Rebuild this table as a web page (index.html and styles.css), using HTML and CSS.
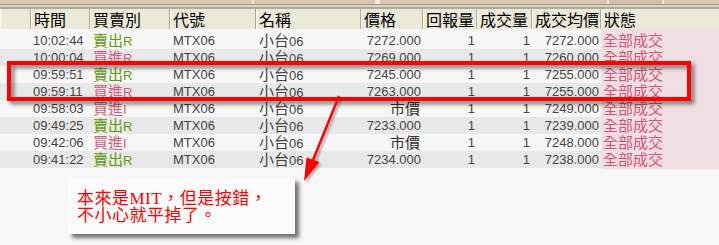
FILE: index.html
```html
<!DOCTYPE html>
<html>
<head>
<meta charset="utf-8">
<link rel="stylesheet" href="styles.css">
</head>
<body>
<div class="page">
  <div class="topbar"></div>
  <div class="bands"></div>
  <div class="grid head">
    <div class="h"></div>
    <div class="h">時間</div>
    <div class="h">買賣別</div>
    <div class="h">代號</div>
    <div class="h">名稱</div>
    <div class="h">價格</div>
    <div class="h">回報量</div>
    <div class="h">成交量</div>
    <div class="h">成交均價</div>
    <div class="h last">狀態</div>
  </div>
  <div class="rows">
    <div class="grid row odd first">
      <div class="c"></div><div class="c t">10:02:44</div><div class="c sell"><span class="cj">賣出</span>R</div><div class="c">MTX06</div><div class="c"><span class="cj">小台</span>06</div><div class="c n">7272.000</div><div class="c n">1</div><div class="c n">1</div><div class="c n">7272.000</div><div class="c st"><span class="cj">全部成交</span></div>
    </div>
    <div class="grid row even">
      <div class="c"></div><div class="c t">10:00:04</div><div class="c buy"><span class="cj">買進</span>R</div><div class="c">MTX06</div><div class="c"><span class="cj">小台</span>06</div><div class="c n">7269.000</div><div class="c n">1</div><div class="c n">1</div><div class="c n">7260.000</div><div class="c st"><span class="cj">全部成交</span></div>
    </div>
    <div class="grid row odd">
      <div class="c"></div><div class="c t">09:59:51</div><div class="c sell"><span class="cj">賣出</span>R</div><div class="c">MTX06</div><div class="c"><span class="cj">小台</span>06</div><div class="c n">7245.000</div><div class="c n">1</div><div class="c n">1</div><div class="c n">7255.000</div><div class="c st"><span class="cj">全部成交</span></div>
    </div>
    <div class="grid row even">
      <div class="c"></div><div class="c t">09:59:11</div><div class="c buy"><span class="cj">買進</span>R</div><div class="c">MTX06</div><div class="c"><span class="cj">小台</span>06</div><div class="c n">7263.000</div><div class="c n">1</div><div class="c n">1</div><div class="c n">7255.000</div><div class="c st"><span class="cj">全部成交</span></div>
    </div>
    <div class="grid row odd">
      <div class="c"></div><div class="c t">09:58:03</div><div class="c buy"><span class="cj">買進</span>I</div><div class="c">MTX06</div><div class="c"><span class="cj">小台</span>06</div><div class="c n"><span class="cj mk">市價</span></div><div class="c n">1</div><div class="c n">1</div><div class="c n">7249.000</div><div class="c st"><span class="cj">全部成交</span></div>
    </div>
    <div class="grid row even">
      <div class="c"></div><div class="c t">09:49:25</div><div class="c sell"><span class="cj">賣出</span>R</div><div class="c">MTX06</div><div class="c"><span class="cj">小台</span>06</div><div class="c n">7233.000</div><div class="c n">1</div><div class="c n">1</div><div class="c n">7239.000</div><div class="c st"><span class="cj">全部成交</span></div>
    </div>
    <div class="grid row odd">
      <div class="c"></div><div class="c t">09:42:06</div><div class="c buy"><span class="cj">買進</span>I</div><div class="c">MTX06</div><div class="c"><span class="cj">小台</span>06</div><div class="c n"><span class="cj mk">市價</span></div><div class="c n">1</div><div class="c n">1</div><div class="c n">7248.000</div><div class="c st"><span class="cj">全部成交</span></div>
    </div>
    <div class="grid row even">
      <div class="c"></div><div class="c t">09:41:22</div><div class="c sell"><span class="cj">賣出</span>R</div><div class="c">MTX06</div><div class="c"><span class="cj">小台</span>06</div><div class="c n">7234.000</div><div class="c n">1</div><div class="c n">1</div><div class="c n">7238.000</div><div class="c st"><span class="cj">全部成交</span></div>
    </div>
  </div>

  <div class="hilite"></div>
  <svg class="arrow" width="719" height="245" viewBox="0 0 719 245">
    <line x1="339" y1="96" x2="313" y2="160" stroke="#ff0000" stroke-width="2.5"/>
    <polygon points="306.5,157.5 319.5,162 304,181" fill="#ff0000"/>
  </svg>
  <div class="note">本來是MIT，但是按錯，<br>不小心就平掉了。</div>
</div>
</body>
</html>
```
FILE: styles.css
```css
html, body {
  margin: 0;
  padding: 0;
}
body {
  background: #f8f8f8;
  width: 719px;
  height: 245px;
  overflow: hidden;
}
.page {
  position: relative;
  width: 719px;
  height: 245px;
  font-family: "Liberation Sans", "Noto Sans CJK TC", sans-serif;
}
.topbar {
  height: 4px;
  background: linear-gradient(to right,
    #dcc5ae 0 252px, #f2eadf 252px 254px, #dcc5ae 254px 375px,
    #f2eadf 375px 380px, #dcc5ae 380px 607px, #f2eadf 607px 609px,
    #d4bea8 609px 662px, #f2eadf 662px 664px, #dcc5ae 664px);
}
.bands {
  height: 2px;
  border-top: 1px solid #9e9b8b;
  border-bottom: 2px solid #aeab9b;
  background: #d8d5c5;
}
.grid {
  display: grid;
  grid-template-columns: 31px 59px 80px 86px 105px 62px 54px 55px 69px 118px;
}
.head {
  height: 20px;
  background: #ebe9d8;
}
.h {
  font-family: "Noto Sans CJK TC", sans-serif;
  font-size: 16px;
  line-height: 20px;
  height: 20px;
  color: #000;
  padding-left: 2px;
  border-left: 1px solid #fbfbf6;
  border-right: 1px solid #aca899;
  white-space: nowrap;
}
.h.last {
  border-right: none;
}
.row {
  height: 17px;
  font-size: 13px;
  line-height: 17px;
  color: #444;
}
.row.first {
  padding-top: 3px;
}
.odd {
  background: #f7f7f7;
}
.even {
  background: #e8e8e8;
}
.c {
  padding-left: 3px;
  white-space: nowrap;
}
.c.t {
  padding-left: 2px;
}
.c.n {
  text-align: right;
  padding-left: 0;
  padding-right: 2px;
}
.row.first .c.st {
  margin-top: -3px;
  padding-top: 3px;
}
.c.st {
  background: #f0dfe1;
  color: #d4517a;
  padding-left: 2px;
}
.cj {
  display: inline-block;
  font-family: "Noto Sans CJK TC", sans-serif;
  font-size: 15px;
  line-height: 15px;
  height: 15px;
}
.mk {
  color: #333;
  margin-right: 1px;
}
.sell {
  color: #5e9a0a;
}
.buy {
  color: #d35c7a;
}
.hilite {
  position: absolute;
  left: 7px;
  top: 61px;
  width: 676px;
  height: 32px;
  border: 4px solid #ff0000;
  filter: drop-shadow(3px 3px 2px rgba(0, 0, 0, 0.55));
}
.arrow {
  position: absolute;
  left: 0;
  top: 0;
  pointer-events: none;
  filter: drop-shadow(2px 2px 1px rgba(0, 0, 0, 0.3));
}
.note {
  position: absolute;
  left: 68px;
  top: 178px;
  width: 218px;
  height: 44px;
  padding: 12px 0 0 9px;
  background: #fbfbfb;
  box-shadow: 4px 4px 4px rgba(0, 0, 0, 0.55);
  color: #ff0000;
  font-family: "Liberation Serif", "Noto Sans CJK TC", serif;
  font-size: 17px;
  line-height: 17px;
  letter-spacing: 0.5px;
  white-space: nowrap;
}
```
